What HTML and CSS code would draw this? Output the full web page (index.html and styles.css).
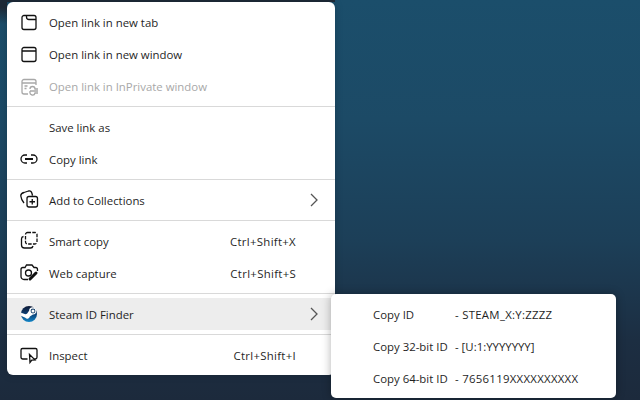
FILE: index.html
```html
<!DOCTYPE html>
<html lang="en">
<head>
<meta charset="utf-8">
<title>Context menu</title>
<link rel="stylesheet" href="styles.css">
</head>
<body>
<div class="desktop">
  <div class="topstrip"></div>
  <div class="leftfade"></div>
  <div class="menu">
    <div class="row"><svg class="icon" viewBox="0 0 20 20"><path d="M5 3.500h10a2 2 0 0 1 2 2v10a2 2 0 0 1-2 2H5a2 2 0 0 1-2-2v-10a2 2 0 0 1 2-2zM7.500 3.500v1.500a2.500 2.500 0 0 0 2.500 2.500h7"/></svg><span class="label">Open link in new tab</span></div>
    <div class="row"><svg class="icon" viewBox="0 0 20 20"><path d="M5 3.500h10a2 2 0 0 1 2 2v10a2 2 0 0 1-2 2H5a2 2 0 0 1-2-2v-10a2 2 0 0 1 2-2zM3 7h14"/></svg><span class="label">Open link in new window</span></div>
    <div class="row disabled"><svg class="icon" viewBox="0 0 20 20"><path d="M9 18H5a2 2 0 0 1-2-2V5.500a2 2 0 0 1 2-2h10a2 2 0 0 1 2 2V9M3 7h14M5.500 10h3M5.500 12.500h2M13.500 10.500a2.500 2.500 0 0 1 2.500 2.500h3M11 13a2.500 2.500 0 0 1 2.500-2.500M11 15h8M11 15v1a2.500 2.500 0 0 0 5 1h3"/></svg><span class="label">Open link in InPrivate window</span></div>
    <div class="sep"></div>
    <div class="row"><span class="icon-gap"></span><span class="label">Save link as</span></div>
    <div class="row"><svg class="icon" viewBox="0 0 20 20"><path d="M8 6H6a4 4 0 0 0 0 8h2M12 6h2a4 4 0 0 1 0 8h-2"/><path class="bar" d="M6 10h8"/></svg><span class="label">Copy link</span></div>
    <div class="sep"></div>
    <div class="row"><svg class="icon" viewBox="0 1.500 20 20"><path d="M10 18.500h6.500a2 2 0 0 0 2-2V10a2 2 0 0 0-2-2H10a2 2 0 0 0-2 2v6.500a2 2 0 0 0 2 2zM13.250 10.500v5.500M10.500 13.250H16M5 14.500C3 12 2 9.500 1.800 7.500 1.600 5 3 4.500 5 4l4.500-1.500c2-.5 3 .5 3.500 2.500l.5 2"/></svg><span class="label grow">Add to Collections</span><svg class="chev" viewBox="0 0 10 16"><path d="M2 2l6 6-6 6"/></svg></div>
    <div class="sep"></div>
    <div class="row"><svg class="icon" viewBox="0 1 20 20"><path d="M4.500 6.500A2.500 2.500 0 0 0 2.500 9v6a3 3 0 0 0 3 3h6a2.500 2.500 0 0 0 2.500-2"/><path class="dash" d="M8.500 2.500h7.500a2 2 0 0 1 2 2v7.500a2 2 0 0 1-2 2H8.500a2 2 0 0 1-2-2V4.500a2 2 0 0 1 2-2z"/></svg><span class="label grow">Smart copy</span><span class="key">Ctrl+Shift+X</span></div>
    <div class="row"><svg class="icon" viewBox="0 1.500 20 20"><path d="M9 18H5a3 3 0 0 1-3-3V8a2 2 0 0 1 2-2h2l1.500-2.500h5.500L15 6h1.500a2 2 0 0 1 2 2v1.500"/><circle cx="9.500" cy="11.500" r="3"/><path class="thick" d="M11 17.500l6-6"/></svg><span class="label grow">Web capture</span><span class="key">Ctrl+Shift+S</span></div>
    <div class="sep sep-before-hover"></div>
    <div class="row hover"><svg class="steam" viewBox="0 0 20 20"><defs><linearGradient id="steamg" x1="0" y1="0" x2="0" y2="1"><stop offset="0" stop-color="#0f1a35"/><stop offset="0.5" stop-color="#0c3f74"/><stop offset="1" stop-color="#1387c9"/></linearGradient></defs><circle cx="10" cy="10" r="8" fill="url(#steamg)"/><path class="steam-w" d="M2 11.800l4.300 1.900a2.600 2.600 0 0 0 4.600-1.100l3-2.200a3.600 3.600 0 1 0-3.800-3.600l-2.100 3a2.700 2.700 0 0 0-1.500.4L2.100 8.700z"/><circle class="steam-d" cx="14" cy="7" r="2.400"/><circle class="steam-w" cx="14" cy="7" r="1.500"/></svg><span class="label grow">Steam ID Finder</span><svg class="chev" viewBox="0 0 10 16"><path d="M2 2l6 6-6 6"/></svg></div>
    <div class="sep sep-after-hover"></div>
    <div class="row"><svg class="icon" viewBox="0 0 20 20"><path d="M8.500 14H3.800a1.800 1.800 0 0 1-1.800-1.800V5a1.500 1.500 0 0 1 1.500-1.500h13A1.500 1.500 0 0 1 18 5v7.200a1.800 1.800 0 0 1-1.800 1.800h-1M10.500 9.500l.5 8 1.800-2.300 3.200-.3z"/></svg><span class="label grow">Inspect</span><span class="key">Ctrl+Shift+I</span></div>
  </div>
  <div class="submenu">
    <div class="subrow"><span class="subname">Copy ID</span><span class="wide">- STEAM_X:Y:ZZZZ</span></div>
    <div class="subrow"><span class="subname">Copy 32-bit ID</span><span>- [U:1:YYYYYYY]</span></div>
    <div class="subrow"><span class="subname">Copy 64-bit ID</span><span class="wide">- 7656119XXXXXXXXXX</span></div>
  </div>
</div>
</body>
</html>
```

FILE: styles.css
```css
html, body {
  margin: 0;
  padding: 0;
}

body {
  width: 640px;
  height: 400px;
  overflow: hidden;
  font-family: "Open Sans", "Noto Sans", sans-serif;
  font-size: 11.4px;
}

.desktop {
  position: relative;
  width: 640px;
  height: 400px;
  overflow: hidden;
  padding: 2px 0 0 7px;
  box-sizing: border-box;
  background: linear-gradient(180deg, #1b4e6b 0%, #1c4a66 30%, #1c3f58 60%, #1c2e42 85%, #1c2a3c 100%);
}

.topstrip {
  position: absolute;
  left: 0;
  top: 0;
  width: 335px;
  height: 2px;
  background: #1d2a38;
}

.leftfade {
  position: absolute;
  left: 0;
  top: 0;
  width: 7px;
  height: 24px;
  background: linear-gradient(180deg, #1d2a38 30%, rgba(29, 42, 56, 0) 100%);
}

.menu {
  position: relative;
  width: 328px;
  box-sizing: border-box;
  padding: 5px 0 3px;
  background: #fff;
  border-radius: 6px;
  box-shadow: 0 0 8px rgba(0, 0, 0, 0.18);
}

.row {
  display: flex;
  align-items: center;
  height: 32px;
  padding: 0 16px 2px 12px;
  box-sizing: border-box;
  color: #1f1f1f;
}

.row.disabled {
  color: #a8a8a8;
}

.row.hover {
  background: #ededed;
  padding-bottom: 0;
}

.icon,
.steam {
  flex: none;
  width: 20px;
  height: 20px;
  margin-right: 10px;
}

.icon path,
.icon circle {
  fill: none;
  stroke: #111;
  stroke-width: 1.300;
}

.disabled .icon path {
  stroke: #a8a8a8;
}

.icon .dash {
  stroke-dasharray: 3.500 1.300;
}

.icon .bar {
  stroke-width: 2;
}

.icon .thick {
  stroke-width: 3;
  stroke-linecap: round;
}

.steam-w {
  fill: #fff;
}

.steam-d {
  fill: #16406b;
}

.icon-gap {
  flex: none;
  width: 30px;
  height: 20px;
}

.label {
  white-space: nowrap;
}

.grow {
  flex: 1;
}

.key {
  white-space: nowrap;
  margin-right: 23px;
  letter-spacing: 0.3px;
}

.chev {
  flex: none;
  width: 10px;
  height: 16px;
}

.chev path {
  fill: none;
  stroke: #555;
  stroke-width: 1.300;
}

.sep {
  height: 1px;
  margin: 3px 0 5px;
  background: #d9d9d9;
}

.sep-before-hover {
  margin-bottom: 4px;
}

.sep-after-hover {
  margin-top: 4px;
}

.submenu {
  position: absolute;
  left: 331px;
  top: 294px;
  width: 285px;
  height: 104px;
  box-sizing: border-box;
  padding: 4px 0 4px 42px;
  background: #fff;
  border-radius: 5px;
  box-shadow: 0 0 10px rgba(0, 0, 0, 0.3);
  color: #1f1f1f;
}

.subrow {
  display: flex;
  align-items: center;
  height: 32px;
  white-space: nowrap;
}

.subname {
  width: 82px;
}

.wide {
  letter-spacing: 0.28px;
}
```
